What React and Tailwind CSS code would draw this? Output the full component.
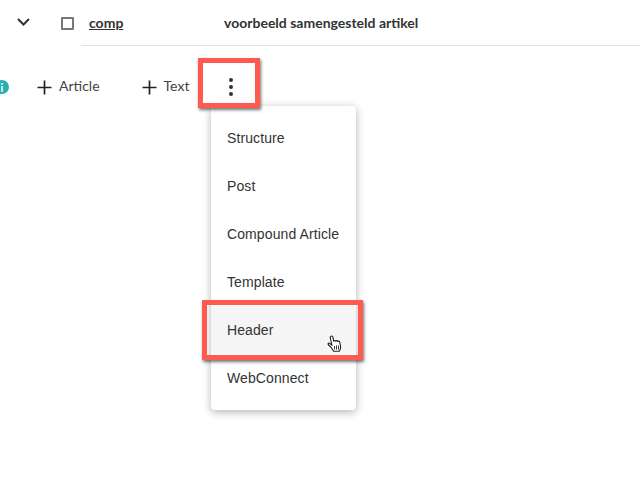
import React from 'react';

const menuItems = ['Structure', 'Post', 'Compound Article', 'Template', 'Header', 'WebConnect'];

const Plus = () => (
  <svg width="15" height="15" viewBox="0 0 15 15" className="shrink-0">
    <path d="M7.5 0.5v14M0.5 7.5h14" stroke="#222" strokeWidth="1.7" fill="none" />
  </svg>
);

const HandCursor = () => (
  <svg width="16" height="18" viewBox="0 0 16 18" className="absolute left-[116px] top-[29px]">
    <path
      d="M4 1.2c.8-.5 1.7 0 1.9.9l.9 4.2c.1-1 1.6-1.2 2 0 .2-.9 1.7-.9 2 .2.4-.7 1.6-.5 1.9.5l.9 4.3c.3 1.9-.3 3.500-1.500 5H6.600l-2.300-3.600L1.200 9.500c-.5-.9.7-1.900 1.600-1.100l2.200 1.900L3.200 2.500c-.1-.6.300-1.100.8-1.300z"
      fill="#fff"
      stroke="#222"
      strokeWidth="1.100"
      strokeLinejoin="round"
    />
    <path d="M7.500 11v3.500M9.500 10.500v4M11.500 10.500v4" stroke="#222" strokeWidth="0.900" />
  </svg>
);

export default function App() {
  return (
    <div className="relative w-[640px] h-[480px] overflow-hidden bg-white font-['Lato',sans-serif] text-[#333]">
      {/* Article row */}
      <div className="flex items-center h-[46px] pl-[17px]">
        <svg width="13" height="8" viewBox="0 0 13 8" className="mb-[3px]">
          <path d="M1 1l5.500 5.500L12 1" stroke="#333" strokeWidth="2" fill="none" />
        </svg>
        <div className="ml-[31px] w-[13px] h-[13px] mt-[1px] rounded-[1px] border-2 border-[#777]" />
        <div className="flex items-center self-stretch flex-1 ml-[7px] pl-[8px] border-b border-[#e2e2e2]">
          <span className="w-[135px] text-[14px] font-bold underline text-[#333]">comp</span>
          <span className="text-[14px] font-bold text-[#333]">voorbeeld samengesteld artikel</span>
        </div>
      </div>

      {/* Toolbar */}
      <div className="flex items-center h-[82px] text-[14px] text-[#444]">
        <div className="w-[14px] h-[14px] -ml-[5px] rounded-full bg-[#26b0b0] flex items-center justify-center text-white text-[11px] font-bold leading-none">
          i
        </div>
        <div className="ml-[28px] flex items-center gap-[7px]">
          <Plus />
          <span className="mb-[3px]">Article</span>
        </div>
        <div className="ml-[42px] flex items-center gap-[7px]">
          <Plus />
          <span className="mb-[3px]">Text</span>
        </div>
        <div className="ml-[40px] flex flex-col gap-[3px]">
          <span className="w-[4px] h-[4px] rounded-full bg-[#333]" />
          <span className="w-[4px] h-[4px] rounded-full bg-[#333]" />
          <span className="w-[4px] h-[4px] rounded-full bg-[#333]" />
        </div>
      </div>

      {/* Dropdown menu */}
      <div className="absolute left-[211px] top-[106px] w-[145px] py-2 bg-white rounded-[4px] shadow-[0_2px_8px_rgba(0,0,0,0.3)] font-['Liberation_Sans',sans-serif] text-[14px] tracking-[0.1px] text-[#333]">
        {menuItems.map((item) => (
          <div
            key={item}
            className={`relative h-[48px] px-4 flex items-center ${item === 'Header' ? 'bg-[#f5f5f5]' : ''}`}
          >
            {item}
            {item === 'Header' && <HandCursor />}
          </div>
        ))}
      </div>

      {/* Highlight boxes */}
      <div className="absolute left-[198px] top-[58px] w-[62px] h-[50px] border-[5px] border-[#ff5a4f] shadow-[1px_2px_3px_rgba(0,0,0,0.55)]" />
      <div className="absolute left-[202px] top-[300px] w-[161px] h-[60px] border-[5px] border-[#ff5a4f] shadow-[1px_2px_3px_rgba(0,0,0,0.55)]" />
    </div>
  );
}
